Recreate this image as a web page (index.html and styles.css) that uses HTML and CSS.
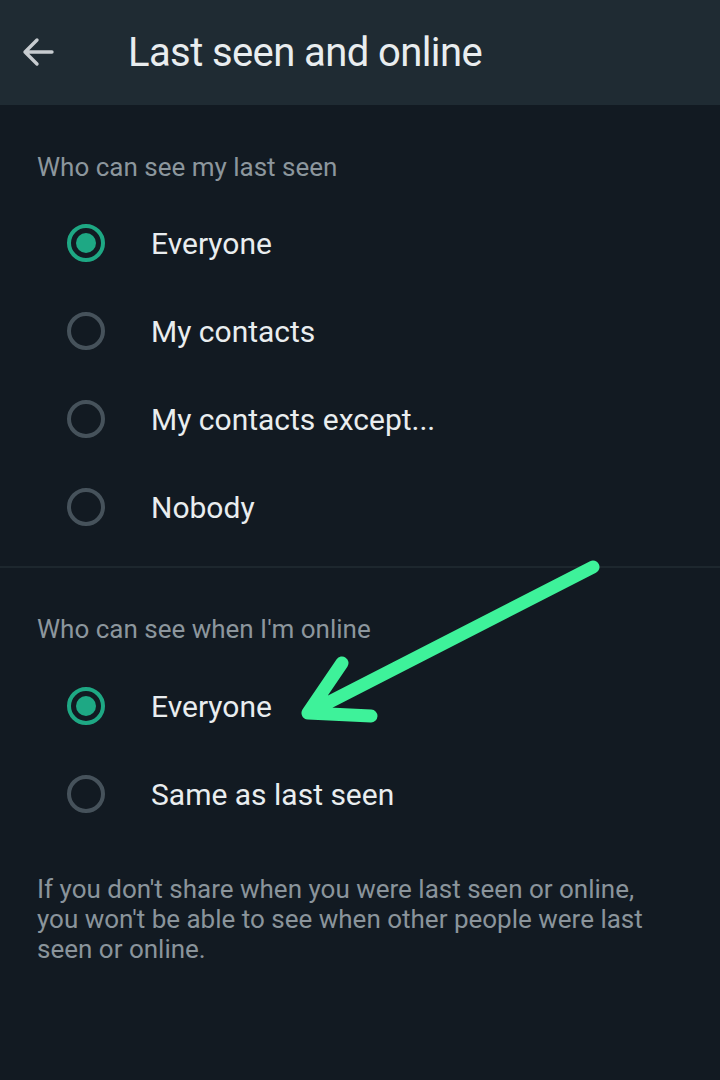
FILE: index.html
```html
<!DOCTYPE html>
<html>
<head>
<meta charset="utf-8">
<link rel="stylesheet" href="styles.css">
</head>
<body>
<div class="screen">
  <header class="appbar">
    <svg class="back" width="34" height="30" viewBox="0 0 34 30"><path d="M31 15H4M16 3L4 15l12 12" fill="none" stroke="#c7ccd0" stroke-width="3.4" stroke-linecap="round" stroke-linejoin="round"/></svg>
    <h1 class="title">Last seen and online</h1>
  </header>

  <section class="group first">
    <div class="group-title">Who can see my last seen</div>
    <div class="option"><span class="radio on"></span><span class="label">Everyone</span></div>
    <div class="option"><span class="radio"></span><span class="label">My contacts</span></div>
    <div class="option"><span class="radio"></span><span class="label">My contacts except...</span></div>
    <div class="option"><span class="radio"></span><span class="label">Nobody</span></div>
  </section>

  <section class="group second">
    <div class="group-title">Who can see when I'm online</div>
    <div class="option"><span class="radio on"></span><span class="label">Everyone</span></div>
    <div class="option"><span class="radio"></span><span class="label">Same as last seen</span></div>
    <p class="note">If you don't share when you were last seen or online, you won't be able to see when other people were last seen or online.</p>
  </section>

  <svg class="arrow" width="720" height="1080" viewBox="0 0 720 1080"><path d="M593 567L308 713M342 663L308 713L371 716" fill="none" stroke="#3ef29a" stroke-width="13" stroke-linecap="round" stroke-linejoin="round"/></svg>
</div>
</body>
</html>
```
FILE: styles.css
```css
* { box-sizing: border-box; }
html, body { margin: 0; padding: 0; }
body { background: #111b21; font-family: Roboto, "Noto Sans", sans-serif; }
.screen { position: relative; width: 720px; height: 1080px; background: #121a22; overflow: hidden; }
.appbar { height: 105px; background: #1f2b33; display: flex; align-items: center; padding-left: 21px; }
.back { flex: none; margin-top: -2px; }
.title { margin: 0 0 0 73px; font-weight: 400; font-size: 40px; color: #e9edef; letter-spacing: -0.6px; }
.group { padding-left: 37px; }
.group.first { padding-top: 45px; padding-bottom: 15px; border-bottom: 2px solid #1d272e; }
.group.second { padding-top: 44px; }
.group-title { font-size: 26px; color: #8c969d; height: 34px; line-height: 34px; margin-bottom: 15px; }
.group.second .group-title { margin-bottom: 16px; }
.option { height: 88px; display: flex; align-items: center; padding-left: 30px; }
.radio { width: 38px; height: 38px; border-radius: 50%; border: 4px solid #46525b; flex: none; position: relative; }
.radio.on { border-color: #1ea884; }
.radio.on::after { content: ""; position: absolute; left: 5px; top: 5px; width: 20px; height: 20px; border-radius: 50%; background: #1ea884; }
.label { margin-left: 46px; font-size: 30px; color: #e9edef; }
.note { width: 630px; margin: 36px 0 0 0; font-size: 26px; line-height: 30px; color: #8a949b; }
.arrow { position: absolute; left: 0; top: 0; pointer-events: none; }
```
